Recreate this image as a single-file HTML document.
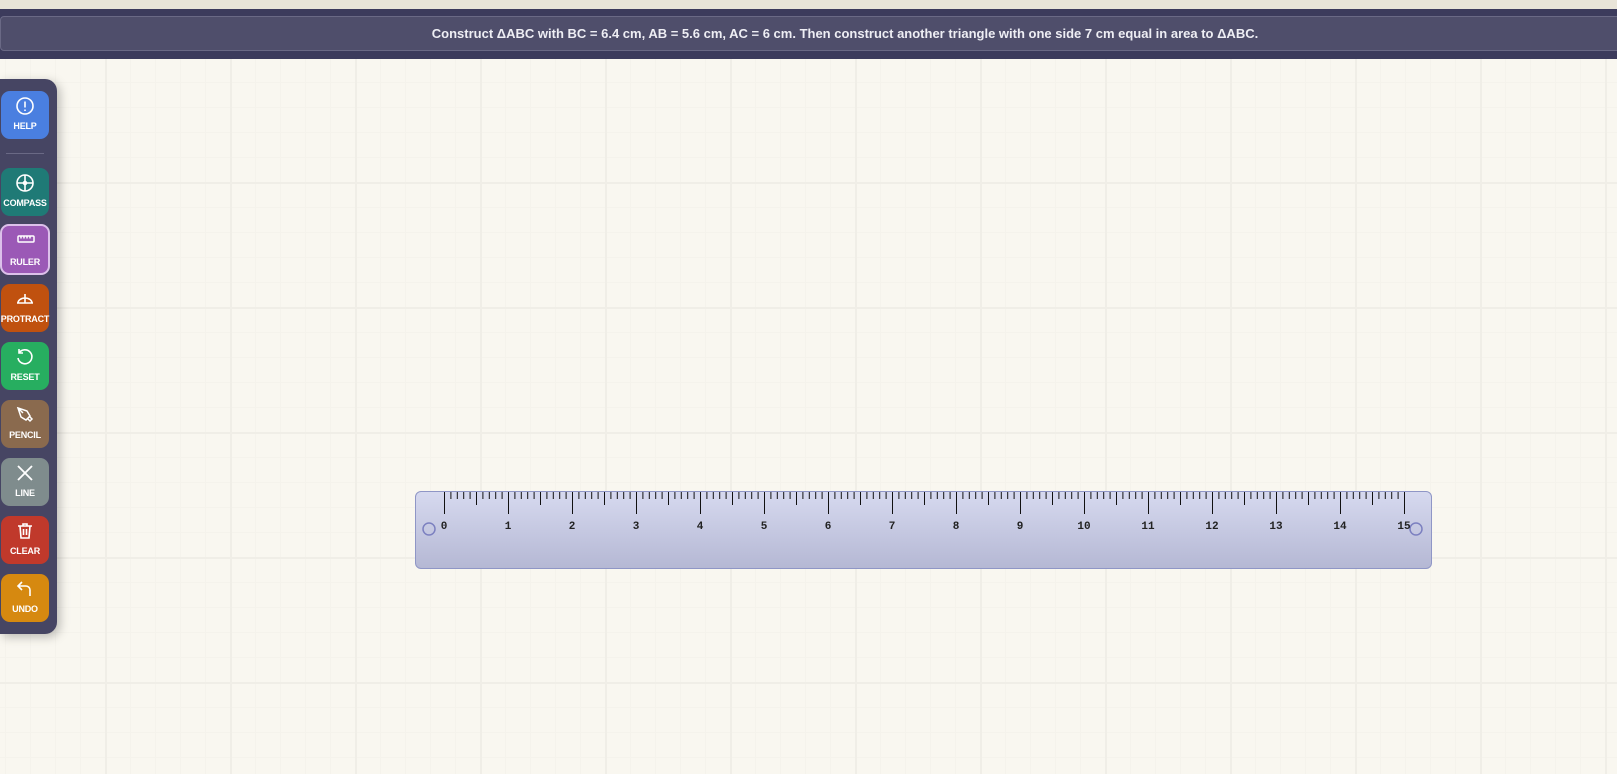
<!DOCTYPE html>
<html><head><meta charset="utf-8"><style>
body{margin:0;width:1617px;height:774px;overflow:hidden;font-family:"Liberation Sans",sans-serif;
background-color:#f9f7f0;
background-image:linear-gradient(#f0eee7 2px,transparent 2px),linear-gradient(90deg,#f0eee7 2px,transparent 2px),linear-gradient(#f5f3ec 1px,transparent 1px),linear-gradient(90deg,#f5f3ec 1px,transparent 1px);
background-size:125px 125px,125px 125px,25px 25px,25px 25px;
background-position:0 182px,105px 0,0 7px,5px 0;position:relative}
.top{position:absolute;left:0;top:0;width:1617px;height:9px;background:#e8e4d8}
.hdr{position:absolute;left:0;top:9px;width:1617px;height:50px;background:#3c3b5c}
.hbox{position:absolute;left:0;top:7px;width:1640px;height:35px;background:#4f4e6b;border:1px solid #6a6985;border-radius:4px;box-sizing:border-box;color:#eeeef4;font-weight:bold;font-size:13px;line-height:33px;text-align:center;padding-left:50px}
.tb{position:absolute;left:0;top:79px;width:57px;height:555px;background:#464563;border-radius:0 12px 12px 0;box-shadow:3px 3px 10px rgba(0,0,0,.25)}
.b{position:absolute;left:1px;width:48px;height:48px;border-radius:9px;color:#fff;font-size:9px;font-weight:bold;text-align:center;box-sizing:border-box}
.b svg{position:absolute;left:14px;top:5px}
.b span{position:absolute;left:-4px;right:-4px;top:30px;letter-spacing:-.2px}
.div{position:absolute;left:6px;top:74px;width:38px;height:1px;background:#6a6985}
.ruler{position:absolute;left:415px;top:491px;width:1017px;height:78px;border:1px solid #8f96c6;border-radius:6px;box-sizing:border-box;background:linear-gradient(#d6d9ef,#b5b8d4)}
.lbl{position:absolute;top:29px;font-family:"Liberation Mono",monospace;font-size:11px;font-weight:bold;color:#222;transform:translateX(-50%)}
</style></head><body>
<div class="top"></div>
<div class="hdr"><div class="hbox">Construct ΔABC with BC = 6.4 cm, AB = 5.6 cm, AC = 6 cm. Then construct another triangle with one side 7 cm equal in area to ΔABC.</div></div>
<div class="tb">
<div class="b" style="top:12px;background:#4a7fe0"><svg width="20" height="20" viewBox="0 0 20 20" fill="none" stroke="#fff" stroke-width="1.6"><circle cx="10" cy="10" r="8"/><path d="M10 5.5v6M10 13.5v1.5"/></svg><span>HELP</span></div>
<div class="b" style="top:89px;background:#1f7a76"><svg width="20" height="20" viewBox="0 0 20 20" fill="none" stroke="#fff" stroke-width="1.6"><circle cx="10" cy="10" r="8"/><path d="M10 2v16M2 10h16"/><circle cx="10" cy="10" r="1.5" fill="#fff"/></svg><span>COMPASS</span></div>
<div class="b" style="top:145px;height:51px;background:#9b59b6;border:2px solid #dcc0ea;left:0;width:50px"><svg width="20" height="20" viewBox="0 0 20 20" fill="none" stroke="#fff" stroke-width="1.5" style="left:14px;top:4px"><rect x="2" y="6" width="16" height="6" rx="1"/><path d="M5 6v2.5M8 6v2.5M11 6v2.5M14 6v2.5"/></svg><span style="top:31px">RULER</span></div>
<div class="b" style="top:205px;background:#c0510f"><svg width="20" height="20" viewBox="0 0 20 20" fill="none" stroke="#fff" stroke-width="1.6"><path d="M3 14a7 5 0 0 1 14 0zM10 5v9M2 14h16"/></svg><span>PROTRACT</span></div>
<div class="b" style="top:263px;background:#27ae60"><svg width="20" height="20" viewBox="0 0 20 20" fill="none" stroke="#fff" stroke-width="1.6"><path d="M4 6a7 7 0 1 1-1 5M4 2v4h4"/></svg><span>RESET</span></div>
<div class="b" style="top:321px;background:#8a6a4e"><svg width="20" height="20" viewBox="0 0 20 20" fill="none" stroke="#fff" stroke-width="1.5"><path d="M3 3l9 3 3 5-4 4-5-3zM3 3l5 5M12 13l3 3 2-2-3-3"/></svg><span>PENCIL</span></div>
<div class="b" style="top:379px;background:#7f8c8d"><svg width="20" height="20" viewBox="0 0 20 20" fill="none" stroke="#fff" stroke-width="1.8"><path d="M3 3l14 14M17 3L3 17"/></svg><span>LINE</span></div>
<div class="b" style="top:437px;background:#c0392b"><svg width="20" height="20" viewBox="0 0 20 20" fill="none" stroke="#fff" stroke-width="1.6"><path d="M3 5h14M8 5V3h4v2M5 5l1 12h8l1-12M8.5 8v6M11.5 8v6"/></svg><span>CLEAR</span></div>
<div class="b" style="top:495px;background:#d68910"><svg width="20" height="20" viewBox="0 0 20 20" fill="none" stroke="#fff" stroke-width="1.6"><path d="M7 3L3 7l4 4M3 7h8a4 4 0 0 1 4 4v6"/></svg><span>UNDO</span></div>
<div class="div"></div>
</div>
<div class="ruler">
<svg width="1017" height="78" style="position:absolute;left:-1px;top:-1px">
<circle cx="14" cy="38" r="6" fill="none" stroke="#7c80c0" stroke-width="1.5"/>
<circle cx="1001" cy="38" r="6" fill="none" stroke="#7c80c0" stroke-width="1.5"/>
<g id="tk" stroke="#111" stroke-width="1"></g>
</svg>
<div class="lbl" style="left:28px">0</div><div class="lbl" style="left:92px">1</div><div class="lbl" style="left:156px">2</div><div class="lbl" style="left:220px">3</div><div class="lbl" style="left:284px">4</div><div class="lbl" style="left:348px">5</div><div class="lbl" style="left:412px">6</div><div class="lbl" style="left:476px">7</div><div class="lbl" style="left:540px">8</div><div class="lbl" style="left:604px">9</div><div class="lbl" style="left:668px">10</div><div class="lbl" style="left:732px">11</div><div class="lbl" style="left:796px">12</div><div class="lbl" style="left:860px">13</div><div class="lbl" style="left:924px">14</div><div class="lbl" style="left:988px">15</div>
</div>
<script>
var g=document.getElementById('tk'),s='';
for(var i=0;i<=150;i++){var x=29.5+i*6.4;var h=i%10==0?22:(i%5==0?13:7);s+='<line x1="'+x.toFixed(1)+'" y1="1" x2="'+x.toFixed(1)+'" y2="'+(1+h)+'"/>';}
g.innerHTML=s;
</script>
</body></html>
